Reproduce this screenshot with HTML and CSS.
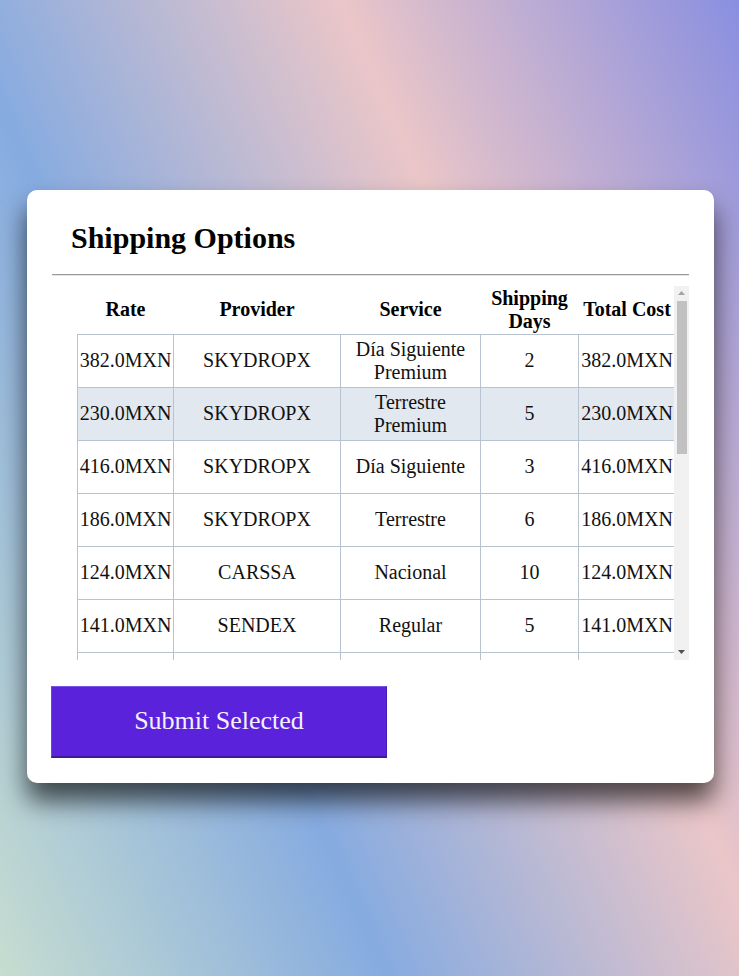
FILE: index.html
```html
<!DOCTYPE html>
<html lang="en">
<head>
<meta charset="utf-8">
<title>Shipping Options</title>
<link rel="stylesheet" href="styles.css">
</head>
<body>
<main class="card">
  <h2 class="title">Shipping Options</h2>
  <hr class="divider">
  <div class="table-frame">
    <div class="scroller">
      <table class="rates">
        <colgroup>
          <col class="c-rate"><col class="c-provider"><col class="c-service"><col class="c-days"><col class="c-total">
        </colgroup>
        <thead>
          <tr><th>Rate</th><th>Provider</th><th>Service</th><th>Shipping Days</th><th>Total Cost</th></tr>
        </thead>
        <tbody>
          <tr><td>382.0MXN</td><td>SKYDROPX</td><td>Día Siguiente Premium</td><td>2</td><td>382.0MXN</td></tr>
          <tr class="selected"><td>230.0MXN</td><td>SKYDROPX</td><td>Terrestre Premium</td><td>5</td><td>230.0MXN</td></tr>
          <tr><td>416.0MXN</td><td>SKYDROPX</td><td>Día Siguiente</td><td>3</td><td>416.0MXN</td></tr>
          <tr><td>186.0MXN</td><td>SKYDROPX</td><td>Terrestre</td><td>6</td><td>186.0MXN</td></tr>
          <tr><td>124.0MXN</td><td>CARSSA</td><td>Nacional</td><td>10</td><td>124.0MXN</td></tr>
          <tr><td>141.0MXN</td><td>SENDEX</td><td>Regular</td><td>5</td><td>141.0MXN</td></tr>
          <tr><td>198.0MXN</td><td>ESTAFETA</td><td>Terrestre</td><td>5</td><td>198.0MXN</td></tr>
          <tr><td>305.0MXN</td><td>ESTAFETA</td><td>Día Siguiente</td><td>2</td><td>305.0MXN</td></tr>
          <tr><td>262.0MXN</td><td>FEDEX</td><td>Express Saver</td><td>3</td><td>262.0MXN</td></tr>
          <tr><td>358.0MXN</td><td>FEDEX</td><td>Standard Overnight</td><td>1</td><td>358.0MXN</td></tr>
          <tr><td>211.0MXN</td><td>REDPACK</td><td>Ecoexpress</td><td>4</td><td>211.0MXN</td></tr>
          <tr><td>289.0MXN</td><td>REDPACK</td><td>Express</td><td>2</td><td>289.0MXN</td></tr>
          <tr><td>175.0MXN</td><td>PAQUETEXPRESS</td><td>Estándar</td><td>6</td><td>175.0MXN</td></tr>
          <tr><td>412.0MXN</td><td>DHL</td><td>Express</td><td>1</td><td>412.0MXN</td></tr>
          <tr><td>233.0MXN</td><td>DHL</td><td>Económico</td><td>4</td><td>233.0MXN</td></tr>
        </tbody>
      </table>
    </div>
    <div class="vbar" aria-hidden="true">
      <div class="vbar-btn">
        <svg width="7" height="4" viewBox="0 0 7 4"><polygon points="3.5,0 7,4 0,4" fill="#a3a3a3"/></svg>
      </div>
      <div class="vbar-track">
        <div class="vbar-thumb"></div>
      </div>
      <div class="vbar-btn">
        <svg width="7" height="4" viewBox="0 0 7 4"><polygon points="0,0 7,0 3.5,4" fill="#505050"/></svg>
      </div>
    </div>
  </div>
  <button class="submit" type="button">Submit Selected</button>
</main>
</body>
</html>
```

FILE: styles.css
```css
html {
  height: 100%;
}

body {
  margin: 0;
  padding: 0 0 4px 2px;
  box-sizing: border-box;
  min-height: 100vh;
  display: flex;
  align-items: center;
  justify-content: center;
  font-family: "Liberation Serif", "Times New Roman", serif;
  color: #111;
  background: linear-gradient(66deg, #c6ddd0 0%, #86abe0 33%, #eac6c8 66%, #898fe0 100%);
}

.card {
  width: 687px;
  box-sizing: border-box;
  background: #fff;
  border-radius: 10px;
  padding: 25px;
  box-shadow: 0 18px 26px rgba(0, 0, 0, 0.65);
}

.title {
  margin: 0 0 18px;
  padding: 5px 19px 0;
  font-size: 30px;
  line-height: 36px;
  font-weight: bold;
  color: #000;
}

.divider {
  margin: 0;
  height: 0;
  border: none;
  border-top: 1px solid #9a9a9a;
  border-bottom: 1px solid #e6e6e6;
}

.table-frame {
  margin-top: 10px;
  height: 374px;
  display: flex;
}

.scroller {
  flex: 1;
  min-width: 0;
  overflow: hidden;
  padding-left: 25px;
}

.vbar {
  width: 15px;
  flex: none;
  display: flex;
  flex-direction: column;
  background: #f1f1f1;
}

.vbar-btn {
  height: 15px;
  flex: none;
  display: flex;
  align-items: center;
  justify-content: center;
}

.vbar-track {
  flex: 1;
  padding: 0 2px 0 3px;
}

.vbar-thumb {
  height: 153px;
  background: #c1c1c1;
}

.rates {
  width: 100%;
  border-collapse: collapse;
  table-layout: fixed;
  font-size: 20px;
}

.c-rate { width: 96px; }
.c-provider { width: 167px; }
.c-service { width: 140px; }
.c-days { width: 98px; }
.c-total { width: 97px; }

.rates th {
  padding: 1px;
  line-height: 23px;
  font-weight: bold;
  text-align: center;
  vertical-align: middle;
  color: #000;
}

.rates td {
  border: 1px solid #b9c3d0;
  padding: 3px 1px;
  height: 46px;
  box-sizing: border-box;
  line-height: 23px;
  text-align: center;
  vertical-align: middle;
}

.rates tbody tr {
  height: 53px;
}

.rates tr.selected td {
  background: #e2e8f0;
}

.submit {
  display: block;
  margin-top: 26px;
  margin-left: -1px;
  width: 336px;
  height: 72px;
  background: #5b22db;
  color: #f4f0ff;
  font-family: "Liberation Serif", "Times New Roman", serif;
  font-size: 26px;
  border: none;
  border-top: 1px solid #7a52e6;
  border-left: 1px solid #6e44e2;
  border-right: 1px solid #4a1cb8;
  border-bottom: 2px solid #3c1a96;
  cursor: pointer;
}
```
